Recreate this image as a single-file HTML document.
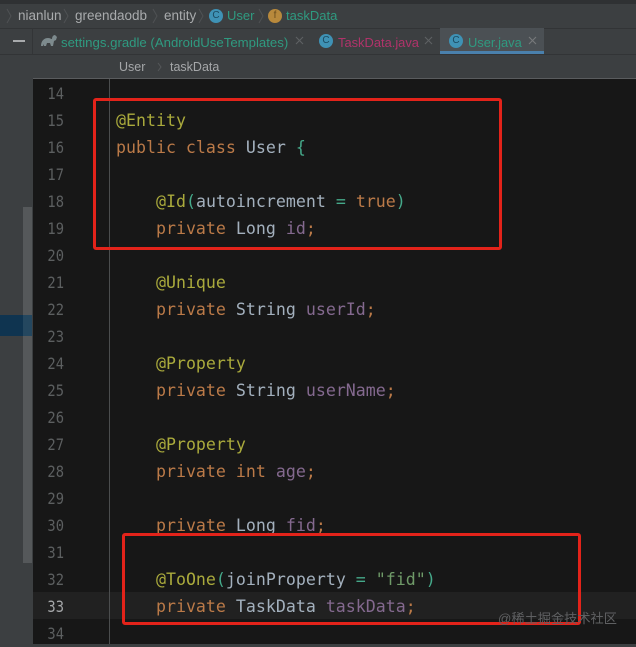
<!DOCTYPE html>
<html><head><meta charset="utf-8"><style>
html,body{margin:0;padding:0}
body{width:636px;height:644px;overflow:hidden;position:relative;background:#3c3f41;font-family:"Liberation Sans",sans-serif}
div,span.a{position:absolute}
.t{white-space:pre;font-size:13.5px;line-height:18px}
.c{position:absolute;width:14px;height:14px;border-radius:50%;background:#3f92b5;color:#1c4a60;font:10px/14px "Liberation Sans",sans-serif;text-align:center}
.n{left:33px;width:31px;text-align:right;font:16px/27px "DejaVu Sans Mono",monospace;color:#5c5f60;transform:scaleX(.86);transform-origin:right center}
.l{left:116px;white-space:pre;font:16.6px/27px "DejaVu Sans Mono",monospace;color:#a3b0bd}
.k{color:#bb7a48}.an{color:#aaaa3c}.p{color:#45a98a}.v{color:#84698f}.g{color:#6f9a68}.s{color:#bb7a48}
.box{position:absolute;border:3px solid #e3231a;border-radius:3px;box-sizing:border-box}
</style></head><body>
<div style="left:0;top:0;width:636px;height:4px;background:#2f3133"></div>
<div style="left:0;top:28px;width:636px;height:1px;background:#323436"></div>
<div class="t" style="left:18px;top:7px;color:#a9abad">nianlun</div>
<div class="t" style="left:75px;top:7px;color:#a9abad">greendaodb</div>
<div class="t" style="left:164px;top:7px;color:#a9abad">entity</div>
<svg style="position:absolute;left:0;top:8px" width="290" height="16" fill="none" stroke="#4f5254" stroke-width="1"><path d="M7 1l4 7-4 7M64 1l4 7-4 7M153 1l4 7-4 7M199 1l4 7-4 7M259 1l4 7-4 7"/></svg>
<span class="c" style="left:209px;top:9px">C</span>
<div class="t" style="left:227px;top:7px;color:#2f9a80;font-size:13px">User</div>
<span class="c" style="left:268px;top:9px;background:#b8893c;color:#6a4c1c">f</span>
<div class="t" style="left:286px;top:7px;color:#2f9a80;font-size:13px">taskData</div>
<div style="left:13px;top:40px;width:12px;height:2px;background:#a8aaac"></div>
<div style="left:32px;top:28px;width:1px;height:26px;background:#333537"></div>
<svg style="position:absolute;left:41px;top:34px" width="16" height="14"><path d="M0 12c0-5 3-8 7-8 2 0 3 1 4 1 0-2 1-4 3-4l2 2-1 3-2 1-1 5h-2l-1-3H6l-1 3H3V10l-1 2z" fill="#7d8a8d"/></svg>
<div class="t" style="left:61px;top:34px;color:#2f9a80;font-size:13.2px">settings.gradle (AndroidUseTemplates)</div>
<span class="c" style="left:319px;top:34px">C</span>
<div class="t" style="left:338px;top:34px;color:#b0336a;font-size:12.9px">TaskData.java</div>
<div style="left:440px;top:28px;width:104px;height:24px;background:#4b5054"></div>
<div style="left:440px;top:51px;width:104px;height:3px;background:#4a80ac"></div>
<span class="c" style="left:449px;top:34px">C</span>
<div class="t" style="left:468px;top:34px;color:#2f9a80;font-size:12.9px">User.java</div>
<svg style="position:absolute;left:0;top:28px" width="636" height="26" fill="none" stroke-width="1.1"><path stroke="#5e6163" d="M296 9l7 7M303 9l-7 7M425 9l7 7M432 9l-7 7"/><path stroke="#77797b" d="M529 9l7 7M536 9l-7 7"/></svg>
<div style="left:0;top:54px;width:636px;height:1px;background:#323436"></div>
<div class="t" style="left:119px;top:58px;color:#a5a7a9;font-size:12.5px">User</div>
<svg style="position:absolute;left:156px;top:62px" width="8" height="10" fill="none" stroke="#55585a"><path d="M2 1l3 4-3 4"/></svg>
<div class="t" style="left:170px;top:58px;color:#a5a7a9;font-size:12.5px">taskData</div>
<div style="left:33px;top:78px;width:603px;height:1px;background:#5a5c5e"></div>
<div style="left:0;top:55px;width:33px;height:589px;background:#3c3f41"></div>
<div style="left:23px;top:207px;width:9px;height:356px;background:#55585a"></div>
<div style="left:0;top:315px;width:32px;height:21px;background:#0f3450"></div>
<div style="left:23px;top:315px;width:9px;height:21px;background:#24475f"></div>
<div style="left:33px;top:79px;width:603px;height:565px;background:#171717"></div>
<div style="left:33px;top:592px;width:603px;height:27px;background:#212121"></div>
<div style="left:109px;top:79px;width:1px;height:565px;background:#4b4d4e"></div>
<div class="n" style="top:80px">14</div>
<div class="n" style="top:107px">15</div>
<div class="n" style="top:134px">16</div>
<div class="n" style="top:161px">17</div>
<div class="n" style="top:188px">18</div>
<div class="n" style="top:215px">19</div>
<div class="n" style="top:242px">20</div>
<div class="n" style="top:269px">21</div>
<div class="n" style="top:296px">22</div>
<div class="n" style="top:323px">23</div>
<div class="n" style="top:350px">24</div>
<div class="n" style="top:377px">25</div>
<div class="n" style="top:404px">26</div>
<div class="n" style="top:431px">27</div>
<div class="n" style="top:458px">28</div>
<div class="n" style="top:485px">29</div>
<div class="n" style="top:512px">30</div>
<div class="n" style="top:539px">31</div>
<div class="n" style="top:566px">32</div>
<div class="n" style="top:593px;color:#a5a7a9">33</div>
<div class="n" style="top:620px">34</div>
<div class="l" style="top:107px"><span class="an">@Entity</span></div>
<div class="l" style="top:134px"><span class="k">public class</span> User <span class="p">{</span></div>
<div class="l" style="top:188px">    <span class="an">@Id</span><span class="p">(</span>autoincrement <span class="p">=</span> <span class="k">true</span><span class="p">)</span></div>
<div class="l" style="top:215px">    <span class="k">private</span> Long <span class="v">id</span><span class="k">;</span></div>
<div class="l" style="top:269px">    <span class="an">@Unique</span></div>
<div class="l" style="top:296px">    <span class="k">private</span> String <span class="v">userId</span><span class="k">;</span></div>
<div class="l" style="top:350px">    <span class="an">@Property</span></div>
<div class="l" style="top:377px">    <span class="k">private</span> String <span class="v">userName</span><span class="k">;</span></div>
<div class="l" style="top:431px">    <span class="an">@Property</span></div>
<div class="l" style="top:458px">    <span class="k">private int</span> <span class="v">age</span><span class="k">;</span></div>
<div class="l" style="top:512px">    <span class="k">private</span> Long <span class="v">fid</span><span class="k">;</span></div>
<div class="l" style="top:566px">    <span class="an">@ToOne</span><span class="p">(</span>joinProperty <span class="p">=</span> <span class="g">"fid"</span><span class="p">)</span></div>
<div class="l" style="top:593px">    <span class="k">private</span> TaskData <span class="v">taskData</span><span class="k">;</span></div>
<div class="box" style="left:93px;top:98px;width:409px;height:152px"></div>
<div class="box" style="left:122px;top:533px;width:459px;height:92px"></div>
<div style="left:498px;top:610px;white-space:pre;font:13.2px/18px 'Liberation Sans','Noto Sans CJK SC',sans-serif;color:#5f6062">@稀土掘金技术社区</div>
</body></html>
